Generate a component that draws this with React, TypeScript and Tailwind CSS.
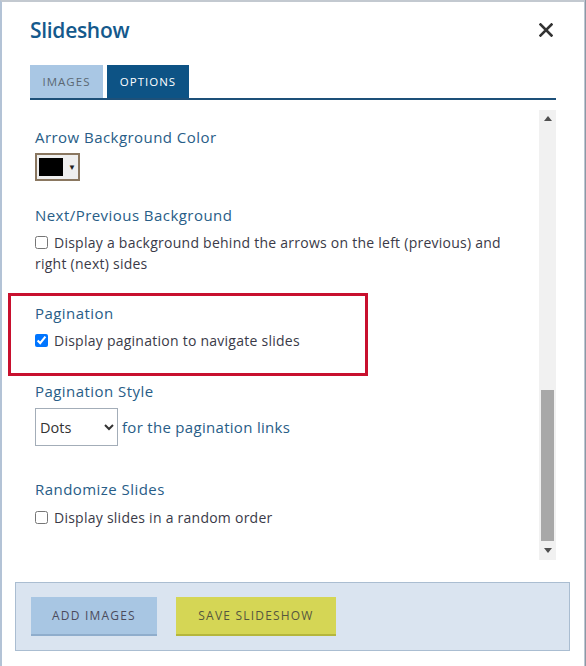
import React from "react";

const font = { fontFamily: '"Open Sans", "Liberation Sans", sans-serif' };

function Label({ children }: { children: React.ReactNode }) {
  return <div className="text-[15px] leading-[22px] tracking-[0.45px] text-[#285d87]">{children}</div>;
}

function Check({ checked, children }: { checked?: boolean; children: React.ReactNode }) {
  return (
    <label className="block text-[14px] leading-[21px] tracking-[0.25px] text-[#3a3a48]">
      <input type="checkbox" defaultChecked={checked} className="mr-[6px] h-[13px] w-[13px] align-[-1px]" />
      {children}
    </label>
  );
}

export default function App() {
  return (
    <div className="flex h-[666px] w-[586px] bg-white" style={font}>
      <div className="relative flex h-[666px] w-[585px] flex-col border-l-2 border-r border-t-2 border-l-[#b3c3d6] border-r-[#bcc6d2] border-t-[#c3c9d0] bg-white">
        {/* header */}
        <div className="flex items-start justify-between pl-[28px] pr-[30px] pt-[13px]">
          <h1 className="text-[21px] font-semibold leading-[30px] tracking-[-0.3px] text-[#14598c]">Slideshow</h1>
          <svg width="14" height="14" viewBox="0 0 14 14" className="mr-[1px] mt-[8px]">
            <path d="M1.5 1.5 L12.5 12.5 M12.5 1.5 L1.5 12.5" stroke="#333" strokeWidth="2.6" strokeLinecap="square" />
          </svg>
        </div>

        {/* tabs */}
        <div className="ml-[28px] mr-[28px] mt-[20px] flex gap-[4px] border-b-[2px] border-[#1d5079]">
          <div className="flex h-[33px] w-[73px] items-center justify-center bg-[#a9c7e4] text-[11.5px] tracking-[1px] text-[#5b6773]">
            IMAGES
          </div>
          <div className="flex h-[33px] w-[82px] items-center justify-center bg-[#0d5385] text-[11.5px] tracking-[1px] text-white">
            OPTIONS
          </div>
        </div>

        {/* scroll area */}
        <div className="ml-[28px] mr-[28px] mt-[10px] flex h-[450px]">
          <div className="flex-1 pl-[5px] pt-[16px]">
            <Label>Arrow Background Color</Label>
            <div className="mt-[5px] flex h-[28px] w-[45px] items-center border-2 border-[#8a7760] bg-[#efefef] pl-[2px]">
              <div className="h-[18px] w-[24px] bg-black" />
              <span className="ml-[5px] text-[8px] leading-none text-[#222]">▼</span>
            </div>

            <div className="mt-[23px]">
              <Label>Next/Previous Background</Label>
              <div className="mt-[6px] pr-[30px]">
                <Check>Display a background behind the arrows on the left (previous) and right (next) sides</Check>
              </div>
            </div>

            <div className="mt-[28px]">
              <Label>Pagination</Label>
              <div className="mt-[6px]">
                <Check checked>Display pagination to navigate slides</Check>
              </div>
            </div>

            <div className="mt-[29px]">
              <Label>Pagination Style</Label>
              <div className="mt-[6px] flex items-center gap-[4px]">
                <select
                  defaultValue="Dots"
                  className="h-[38px] w-[83px] border border-[#a3adb8] bg-white pl-0 text-[14.5px] text-[#333]"
                >
                  <option>Dots</option>
                  <option>Numbers</option>
                </select>
                <span className="text-[15px] tracking-[0.3px] text-[#285d87]">for the pagination links</span>
              </div>
            </div>

            <div className="mt-[32px]">
              <Label>Randomize Slides</Label>
              <div className="mt-[7px]">
                <Check>Display slides in a random order</Check>
              </div>
            </div>
          </div>

          {/* scrollbar */}
          <div className="flex w-[17px] flex-col items-center bg-[#f1f1f1]">
            <div className="flex h-[17px] w-full items-center justify-center">
              <svg width="8" height="5" viewBox="0 0 8 5"><path d="M0 5 L4 0 L8 5 Z" fill="#505050" /></svg>
            </div>
            <div className="flex-1" />
            <div className="h-[151px] w-[13px] bg-[#a8a8a8]" />
            <div className="flex h-[19px] w-full items-center justify-center">
              <svg width="8" height="5" viewBox="0 0 8 5"><path d="M0 0 L8 0 L4 5 Z" fill="#505050" /></svg>
            </div>
          </div>
        </div>

        {/* footer */}
        <div className="ml-[13px] mr-[14px] mt-[22px] flex h-[69px] items-center gap-[19px] border border-[#aabdd1] bg-[#dae4f0] pl-[15px]">
          <button className="h-[39px] w-[126px] border-b-2 border-[#8fadcc] bg-[#a8c6e3] text-[12px] tracking-[1.2px] text-[#4b4b5c]">
            ADD IMAGES
          </button>
          <button className="h-[39px] w-[160px] border-b-2 border-[#b5b63c] bg-[#d5d655] text-[12px] tracking-[1.2px] text-[#56563e]">
            SAVE SLIDESHOW
          </button>
        </div>

        {/* annotation */}
        <div className="pointer-events-none absolute left-[6px] top-[291px] h-[83px] w-[360px] border-[3px] border-[#c8102e]" />
      </div>
      <div className="h-[666px] w-[1px] bg-[#8d98a4]" />
    </div>
  );
}
